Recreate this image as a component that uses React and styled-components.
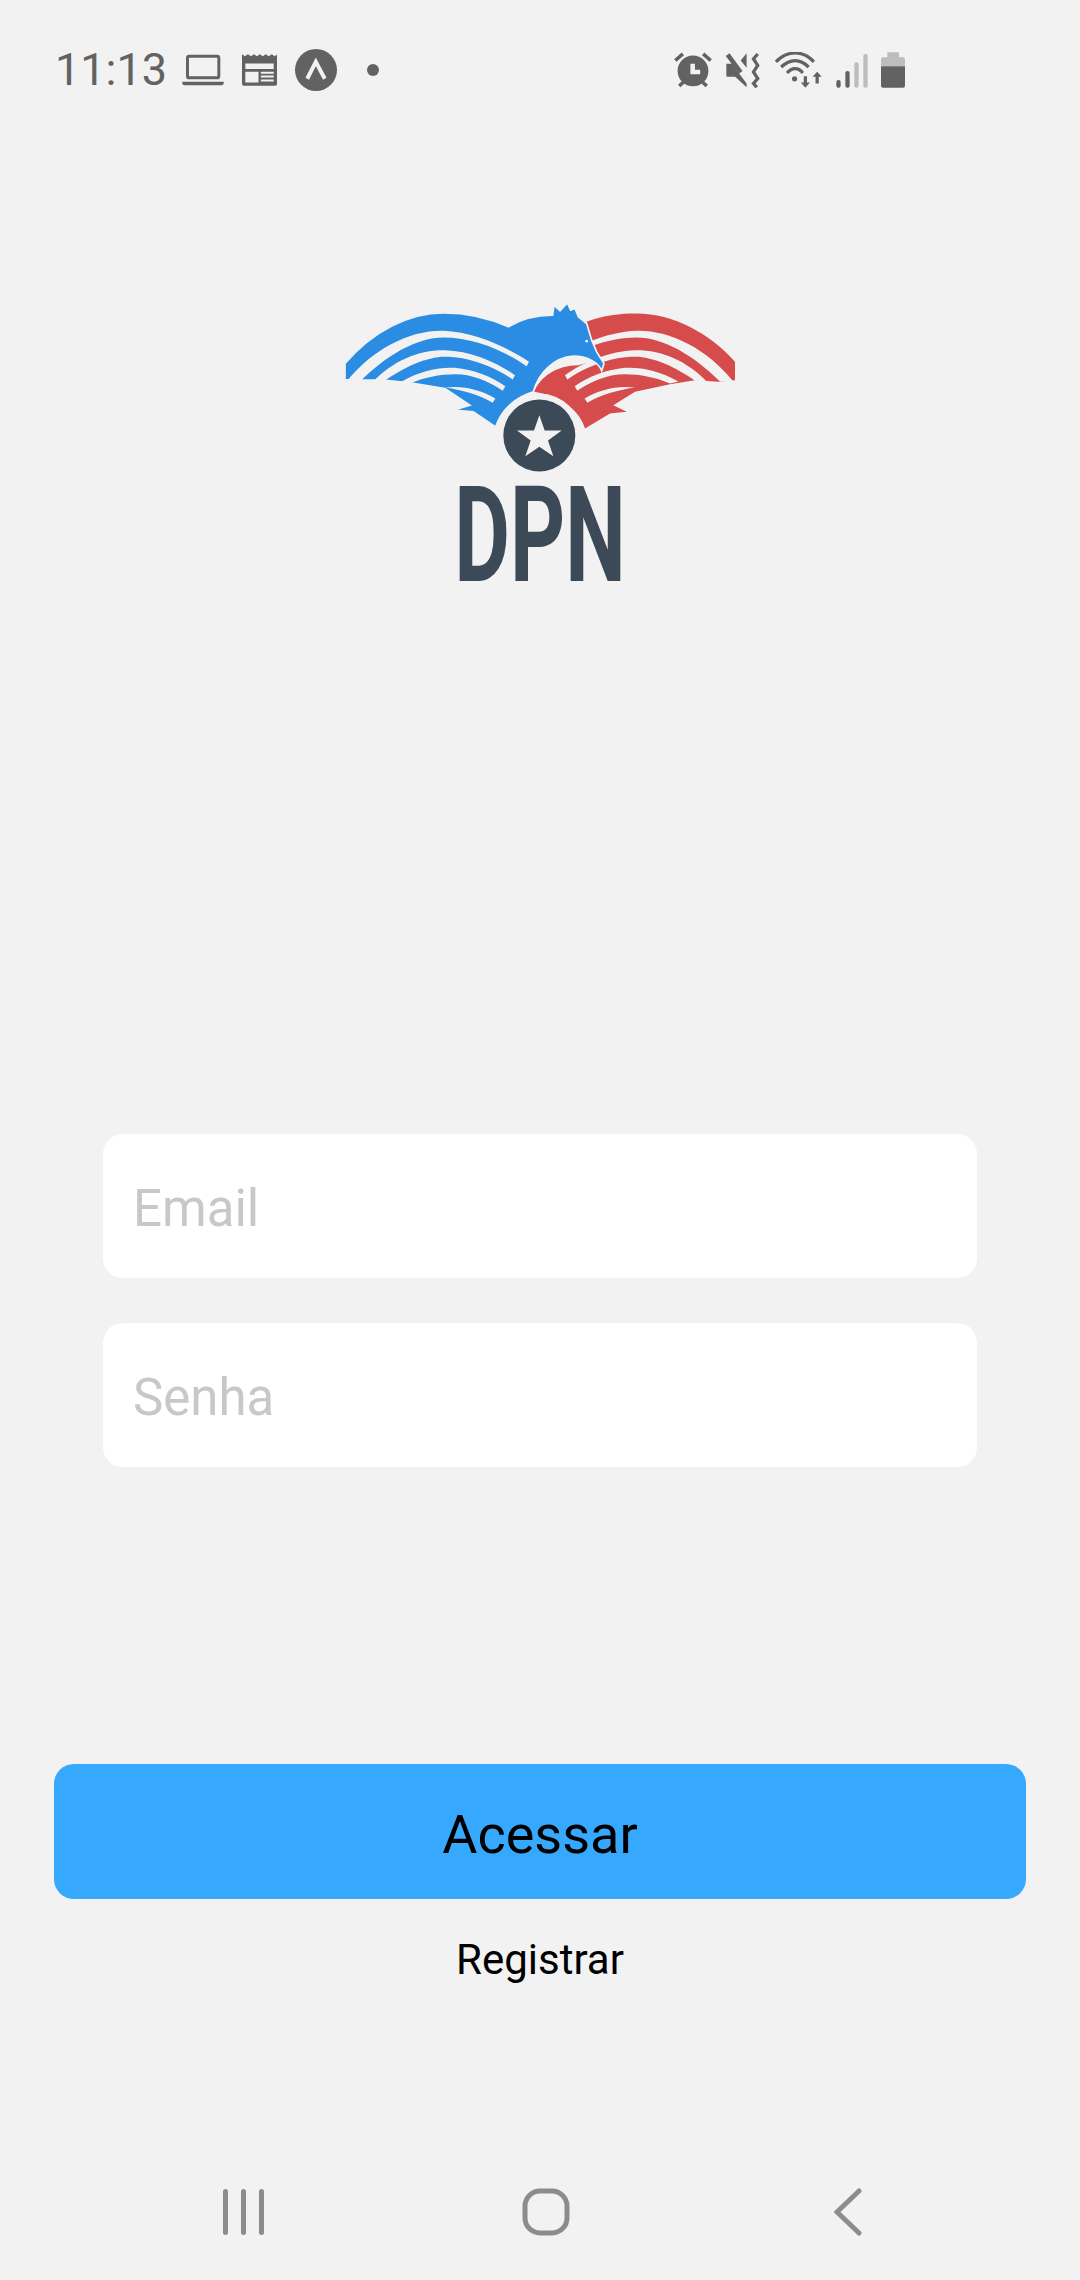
import React from 'react';
import styled, { createGlobalStyle } from 'styled-components';

const GlobalStyle = createGlobalStyle`
  html, body {
    margin: 0;
    padding: 0;
    background-color: #f2f2f2;
  }
`;

const Screen = styled.div`
  width: 1080px;
  height: 2280px;
  display: flex;
  flex-direction: column;
  align-items: center;
  background-color: #f2f2f2;
  font-family: Roboto, "Liberation Sans", sans-serif;
  overflow: hidden;
`;

const StatusBar = styled.div`
  width: 100%;
  height: 140px;
  box-sizing: border-box;
  display: flex;
  align-items: center;
  justify-content: space-between;
  padding: 0 175px 0 55px;
  color: #626262;
`;

const StatusGroup = styled.div`
  display: flex;
  align-items: center;
  gap: ${props => props.$gap}px;
`;

const Clock = styled.span`
  font-size: 45px;
  line-height: 50px;
  margin-right: -3px;
`;

const Dot = styled.span`
  width: 12px;
  height: 12px;
  margin-left: 12px;
  border-radius: 50%;
  background-color: #626262;
`;

const LogoWrap = styled.div`
  margin-top: 160px;
  width: 390px;
  display: flex;
  flex-direction: column;
  align-items: center;
  filter: blur(0.5px);
`;

const LogoText = styled.span`
  margin-top: 11px;
  height: 96px;
  color: #3b4a56;
  font-size: 134px;
  font-weight: 700;
  line-height: 96px;
  transform: scaleX(0.64);
`;

const Form = styled.div`
  margin-top: 550px;
  display: flex;
  flex-direction: column;
  gap: 45px;
`;

const Field = styled.input`
  width: 874px;
  height: 144px;
  box-sizing: border-box;
  padding: 4px 30px 0;
  border: none;
  border-radius: 20px;
  background-color: #fff;
  font-family: Roboto, "Liberation Sans", sans-serif;
  font-size: 51px;
  outline: none;

  &::placeholder {
    color: #c8c8c8;
    opacity: 1;
  }
`;

const Submit = styled.button`
  margin-top: 297px;
  width: 972px;
  height: 135px;
  padding: 5px 0 0;
  border: none;
  border-radius: 20px;
  background-color: #36a9ff;
  color: #000;
  font-family: Roboto, "Liberation Sans", sans-serif;
  font-size: 54px;
`;

const RegisterLink = styled.div`
  margin-top: 36px;
  color: #000;
  font-size: 42px;
  line-height: 50px;
`;

const NavBar = styled.div`
  margin-top: auto;
  width: 100%;
  height: 136px;
  box-sizing: border-box;
  padding-left: 12px;
  display: flex;
  align-items: center;
  justify-content: center;
`;

const NavSlot = styled.div`
  width: 302px;
  display: flex;
  justify-content: center;
`;

// status icons use a 3-units-per-pixel box
const Icon = ({ w, h, box, children }) => (
  <svg width={w} height={h} viewBox={box} fill="#626262">{children}</svg>
);

const LaptopIcon = () => (
  <Icon w={42} h={32} box="453 72 127 98">
    <rect x="469" y="79" width="96" height="66" rx="5" fill="none" stroke="#626262" strokeWidth="9" />
    <path d="M453 157h127v4a7 7 0 0 1-7 7H460a7 7 0 0 1-7-7z" />
  </Icon>
);

const NewsIcon = () => (
  <Icon w={35} h={32} box="636 72 106 96">
    <path d="M636 72l9 6 9-6 9 6 9-6 9 6 9-6 9 6 9-6 9 6 9-6 9 6 8-6v88a8 8 0 0 1-8 8H644a8 8 0 0 1-8-8z" />
    <path d="M646 100h86v17h-86zM646 125h40v33h-40z" fill="#f2f2f2" />
    <path d="M693 125h39v6h-39zM693 137h39v6h-39zM693 149h39v6h-39z" fill="#f2f2f2" />
  </Icon>
);

const ExpoIcon = () => (
  <Icon w={42} h={42} box="795 57 127 127">
    <circle cx="858.500" cy="120.500" r="63.500" />
    <path d="M832 147L858 96l27 51" fill="none" stroke="#f2f2f2" strokeWidth="12" />
  </Icon>
);

const AlarmIcon = () => (
  <Icon w={38} h={36} box="68 64 116 110">
    <circle cx="126" cy="122" r="47" />
    <path d="M118 100h14v18h16v14h-30z" fill="#f2f2f2" />
    <path d="M72 90L95 70M180 90L157 70M84 168l14-13M168 168l-14-13" fill="none" stroke="#626262" strokeWidth="11" />
  </Icon>
);

const MuteIcon = () => (
  <Icon w={36} h={36} box="225 64 108 110">
    <path d="M228 100h17l45 60v12l-35-32h-23a4 4 0 0 1-4-4zM272 90l18-22v44z" />
    <path d="M232 72l40 54" fill="none" stroke="#626262" strokeWidth="14" />
    <path d="M324 70l-13 15 13 20-13 20 13 20-13 15 10 12" fill="none" stroke="#626262" strokeWidth="10" />
  </Icon>
);

const WifiIcon = () => (
  <Icon w={49} h={36} box="372 64 146 110">
    <path d="M376 94C412 58 458 58 492 94M392 110C420 84 450 84 476 110M410 128C425 110 445 110 458 128" fill="none" stroke="#626262" strokeWidth="10" />
    <circle cx="433" cy="146" r="8" />
    <path d="M461 138h10v19h9l-14 16-14-16h9z" />
    <path d="M497 160h10v-20h9l-14-16-14 16h9z" />
  </Icon>
);

const SignalIcon = () => (
  <Icon w={32} h={36} box="553 66 94 108">
    <rect x="553" y="150" width="13" height="23" rx="6" />
    <rect x="580" y="123" width="13" height="50" rx="6" />
    <rect x="607" y="97" width="13" height="76" rx="6" fill="#bdbdbd" />
    <rect x="634" y="72" width="13" height="101" rx="6" fill="#bdbdbd" />
  </Icon>
);

const BatteryIcon = () => (
  <Icon w={24} h={36} box="693 65 72 108">
    <path d="M712 66h35v15h12a6 6 0 0 1 6 6v21h-72V87a6 6 0 0 1 6-6h13z" fill="#bdbdbd" />
    <path d="M693 108h72v58a6 6 0 0 1-6 6h-60a6 6 0 0 1-6-6z" />
  </Icon>
);

const MenuIcon = () => (
  <svg width="42" height="48" viewBox="0 0 42 48" fill="#8c8c8c">
    <rect x="0" y="1" width="5" height="46" rx="2.500" />
    <rect x="18" y="1" width="5" height="46" rx="2.500" />
    <rect x="36" y="1" width="5" height="46" rx="2.500" />
  </svg>
);

const HomeIcon = () => (
  <svg width="48" height="48" viewBox="0 0 48 48" fill="none">
    <rect x="3" y="3" width="42" height="42" rx="15" stroke="#8c8c8c" strokeWidth="5" />
  </svg>
);

const BackIcon = () => (
  <svg width="28" height="48" viewBox="0 0 28 48" fill="none">
    <path d="M25 3L3 24l22 21" stroke="#8c8c8c" strokeWidth="5" strokeLinecap="round" />
  </svg>
);

// wedge gaps between the feathers, wide at the wing tip; the red wing mirrors them
const FEATHER_GAPS = [
  'M50 304C130 205 240 150 340 152C430 155 530 200 597 245L590 258C520 210 430 172 340 172C260 172 170 225 90 304Z',
  'M130 304C190 240 270 208 345 210C420 212 500 245 555 285L548 298C495 262 420 230 345 230C290 230 220 262 162 304Z',
  'M215 304C270 272 330 260 375 263C430 268 485 290 526 318L518 332C480 305 430 282 375 282C330 282 280 292 240 310Z',
  'M345 322C400 315 455 330 496 355L488 368C450 345 400 330 345 322Z',
];

// coords follow the logo crop, 3 units to a pixel
const LOGO_BG = '#f2f2f2';
const LogoMark = () => (
  <svg width="390" height="177" viewBox="45 60 1170 530">
    <path
      d="M770 125C820 105 870 100 920 100C1030 100 1140 160 1215 245L1215 300L1165 305L1095 300L1020 312L915 335L850 375L890 395L840 400L765 445C750 395 700 350 612 335C630 290 680 255 745 255L800 240Z"
      fill="#d64c4c"
    />
    <g fill={LOGO_BG} transform="translate(1260 0) scale(-1 1)">
      {FEATHER_GAPS.map((d) => <path key={d} d={d} />)}
    </g>
    <path
      d="M45 250C130 150 240 98 340 98C420 98 480 115 535 140C570 118 620 105 668 105L672 75L690 92L712 68L722 90L735 85L745 110L770 130L785 180L800 215L822 250L815 272C805 245 770 228 730 228C670 232 625 280 610 335C560 350 515 385 497 440L430 395L370 390L420 375L345 325L240 308L160 300L90 300L45 298Z"
      fill="#2a8ce2"
      stroke={LOGO_BG}
      strokeWidth="5"
    />
    <g fill={LOGO_BG}>
      {FEATHER_GAPS.map((d) => <path key={d} d={d} />)}
    </g>
    <circle cx="770" cy="183" r="4" fill={LOGO_BG} />
    <circle cx="628" cy="466" r="126" fill={LOGO_BG} />
    <circle cx="628" cy="466" r="108" fill="#3b4a56" />
    <path d="M628 405L644 451L695 451L654 481L670 528L628 500L586 528L602 481L561 451L612 451Z" fill={LOGO_BG} />
  </svg>
);

const App = () => (
  <>
    <GlobalStyle />
    <Screen>
      <StatusBar>
        <StatusGroup $gap={18}>
          <Clock>11:13</Clock>
          <LaptopIcon />
          <NewsIcon />
          <ExpoIcon />
          <Dot />
        </StatusGroup>
        <StatusGroup $gap={13}>
          <AlarmIcon />
          <MuteIcon />
          <WifiIcon />
          <SignalIcon />
          <BatteryIcon />
        </StatusGroup>
      </StatusBar>
      <LogoWrap>
        <LogoMark />
        <LogoText>DPN</LogoText>
      </LogoWrap>
      <Form>
        <Field placeholder="Email" />
        <Field placeholder="Senha" />
      </Form>
      <Submit>Acessar</Submit>
      <RegisterLink>Registrar</RegisterLink>
      <NavBar>
        <NavSlot><MenuIcon /></NavSlot>
        <NavSlot><HomeIcon /></NavSlot>
        <NavSlot><BackIcon /></NavSlot>
      </NavBar>
    </Screen>
  </>
);

export default App;
